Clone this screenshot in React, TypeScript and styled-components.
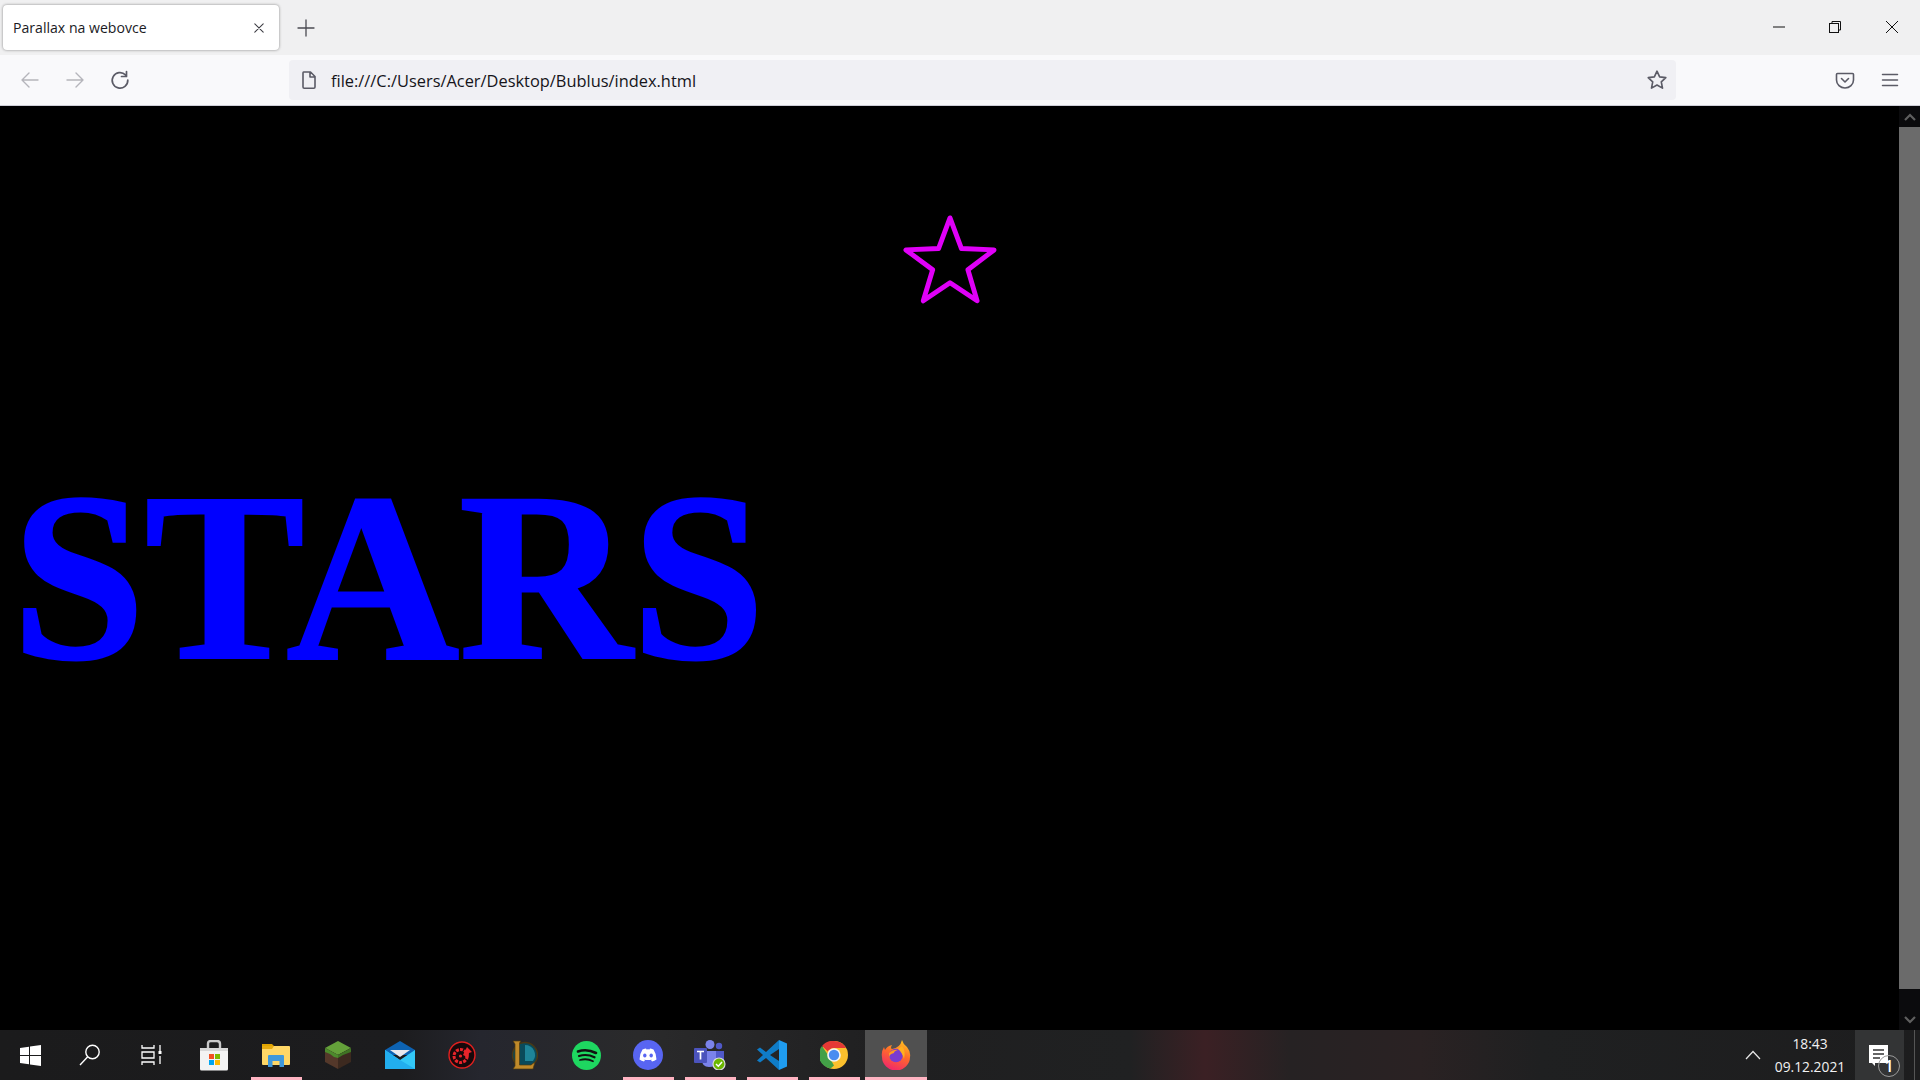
import styled, { createGlobalStyle } from 'styled-components';

const GlobalStyle = createGlobalStyle`
  html, body {
    margin: 0;
    padding: 0;
    background: #000;
  }
  #root {
    width: 1920px;
    height: 1080px;
    overflow: hidden;
  }
`;

const Screen = styled.div`
  width: 1920px;
  height: 1080px;
  display: grid;
  grid-template-rows: 55px 51px 924px 50px;
  font-family: 'Open Sans', 'Liberation Sans', sans-serif;
`;

const TabStrip = styled.div`
  display: flex;
  align-items: flex-start;
  background: #f0f0f1;
  padding-left: 3px;
`;

const Tab = styled.div`
  width: 276px;
  height: 45px;
  margin-top: 5px;
  box-sizing: border-box;
  padding: 0 13px 0 10px;
  display: flex;
  align-items: center;
  justify-content: space-between;
  background: #fff;
  border-radius: 4px;
  box-shadow: 0 0 3px rgba(0, 0, 0, 0.45);
`;

const TabTitle = styled.span`
  font-size: 14.1px;
  color: #1b1b1f;
`;

const NewTab = styled.div`
  width: 24px;
  height: 45px;
  margin: 5px 0 0 15px;
  display: flex;
  align-items: center;
  justify-content: center;
`;

const WindowControls = styled.div`
  margin-left: auto;
  display: flex;
`;

const WindowButton = styled.div`
  width: 56.5px;
  height: 53px;
  display: flex;
  align-items: center;
  justify-content: center;
`;

const Toolbar = styled.div`
  display: flex;
  align-items: center;
  box-sizing: border-box;
  background: #f9f9fb;
  border-bottom: 1px solid #cfcfd8;
  padding-left: 7px;
  padding-bottom: 1px;
`;

const NavButton = styled.div`
  width: 45px;
  height: 40px;
  display: flex;
  align-items: center;
  justify-content: center;
`;

const UrlBar = styled.div`
  width: 1387px;
  height: 40px;
  margin-left: 147px;
  margin-right: 146px;
  box-sizing: border-box;
  padding: 0 8px 0 10px;
  display: flex;
  align-items: center;
  background: #f0f0f4;
  border-radius: 4px;
`;

const UrlText = styled.span`
  margin: 2px 0 0 12px;
  flex: 1;
  font-size: 16.4px;
  color: #15141a;
`;

const Stage = styled.div`
  display: flex;
  background: #000;
`;

const Viewport = styled.main`
  flex: 1;
  display: flex;
  flex-direction: column;
`;

const StarFrame = styled.div`
  display: flex;
  justify-content: center;
  padding-top: 108px;
`;

const Heading = styled.h1`
  margin: 133px 0 0 12px;
  font-family: 'Liberation Serif', 'Times New Roman', serif;
  font-size: 239px;
  font-weight: 700;
  line-height: 276px;
  color: #0000ff;
  -webkit-text-stroke: 3px #0000ff;
`;

const Scrollbar = styled.div`
  width: 21px;
  display: flex;
  flex-direction: column;
  background: #0b0b0d;
`;

const ScrollArrow = styled.div`
  height: 21px;
  display: flex;
  align-items: center;
  justify-content: center;
`;

const ScrollThumb = styled.div`
  height: 862px;
  background: #6b6b6b;
`;

const ScrollTrack = styled.div`
  flex: 1;
`;

const Taskbar = styled.footer`
  display: flex;
  align-items: stretch;
  background: linear-gradient(
    90deg,
    #1b1b1c 0,
    #1c1c1e 400px,
    #25262e 480px,
    #2a2a2b 640px,
    #1f1f20 900px,
    #202122 1130px,
    #3b2024 1205px,
    #262223 1290px,
    #2a2223 1420px,
    #1f2021 1540px,
    #1d1d1e 1920px
  );
`;

const TaskButton = styled.div<{ $width?: number; $active?: boolean; $running?: boolean }>`
  position: relative;
  width: ${({ $width }) => $width ?? 62}px;
  display: flex;
  align-items: center;
  justify-content: center;
  background: ${({ $active }) => ($active ? '#505050' : 'transparent')};

  &::after {
    content: '';
    display: ${({ $running }) => ($running ? 'block' : 'none')};
    position: absolute;
    bottom: 0;
    left: ${({ $active }) => ($active ? 0 : 5.5)}px;
    right: ${({ $active }) => ($active ? 0 : 5.5)}px;
    height: 3px;
    background: #ffb4c2;
  }
`;

const Tray = styled.div`
  margin-left: auto;
  display: flex;
  align-items: stretch;
`;

const TrayChevron = styled.div`
  width: 40px;
  display: flex;
  align-items: center;
  justify-content: center;
`;

const Clock = styled.div`
  width: 74px;
  display: flex;
  flex-direction: column;
  align-items: center;
  justify-content: center;
  gap: 4px;
  font-size: 13.8px;
  line-height: 19px;
  color: #f2f2f2;
`;

const NotifyButton = styled.div`
  position: relative;
  width: 49px;
  margin-left: 8px;
  background: #333435;
`;

const NotifyGlyph = styled.svg`
  display: block;
  margin: 15px 0 0 14px;
`;

const NotifyBadge = styled.span`
  position: absolute;
  left: 23px;
  top: 25px;
  width: 20px;
  height: 20px;
  border: 1px solid #9a9a9a;
  border-radius: 50%;
  font-size: 16px;
  font-weight: 600;
  line-height: 20px;
  text-align: center;
  color: #fff;
`;

const DesktopPeek = styled.div`
  width: 6px;
  margin-left: 10px;
  box-sizing: border-box;
  border-left: 1px solid #555;
`;

const chrome = '#5b5b66';

function Stroke({ size, children, color = chrome, width = 1.6 }: { size: number; children: React.ReactNode; color?: string; width?: number }) {
  return (
    <svg width={size} height={size} viewBox="0 0 20 20" fill="none" stroke={color} strokeWidth={width} strokeLinecap="round" strokeLinejoin="round">
      {children}
    </svg>
  );
}

function PinkStar() {
  return (
    <svg width="98" height="93" viewBox="0 0 100 95" fill="none" stroke="#e000f8" strokeWidth="5" strokeLinejoin="round">
      <path d="M50 4 L61.7 35.3 L95 36.7 L68.3 57 L77.7 88.7 L50 70.3 L22.7 88.7 L32.3 57 L5 36.7 L38.3 35.3 Z" />
    </svg>
  );
}

function WindowsLogo() {
  return (
    <svg width="21" height="21" viewBox="0 0 21 21" fill="#fff">
      <path d="M0 3 L9 1.7 V10 H0 Z M10 1.5 L21 0 V10 H10 Z M0 11 H9 V19.3 L0 18 Z M10 11 H21 V21 L10 19.5 Z" />
    </svg>
  );
}

function SearchIcon() {
  return (
    <svg width="22" height="22" viewBox="0 0 22 22" fill="none" stroke="#fff" strokeWidth="1.4">
      <circle cx="13.5" cy="8" r="6.7" />
      <path d="M8.7 12.8 L1 21" />
    </svg>
  );
}

function TaskViewIcon() {
  return (
    <svg width="22" height="20" viewBox="0 0 22 20" fill="none" stroke="#fff" strokeWidth="1.3">
      <path d="M1 0 V3 H13 V0 M1 7 H13 V13 H1 Z M1 20 V17 H13 V20 M19 0 V6 M19 11 V19" />
      <rect x="17.5" y="6" width="3" height="3" fill="#fff" stroke="none" />
    </svg>
  );
}

function StoreIcon() {
  return (
    <svg width="30" height="31" viewBox="0 0 30 31">
      <path d="M9 8 V4 Q9 1 12 1 H18 Q21 1 21 4 V8" fill="none" stroke="#c9c9c9" strokeWidth="2.4" />
      <path d="M1 8 H29 V29 Q29 30.5 27.5 30.5 H2.5 Q1 30.5 1 29 Z" fill="#f3f3f3" />
      <rect x="1" y="8" width="28" height="3" fill="#d8d8d8" />
      <rect x="10" y="14" width="5" height="5" fill="#f25022" />
      <rect x="16" y="14" width="5" height="5" fill="#7fba00" />
      <rect x="10" y="20" width="5" height="5" fill="#00a4ef" />
      <rect x="16" y="20" width="5" height="5" fill="#ffb900" />
    </svg>
  );
}

function ExplorerIcon() {
  return (
    <svg width="28" height="24" viewBox="0 0 28 24">
      <path d="M0 1 H10 L13 4 H0 Z" fill="#e0a400" />
      <rect y="3" width="28" height="19" rx="1" fill="#ffd766" />
      <path d="M0 3 H12 L10 6 H0 Z" fill="#e8ac10" />
      <path d="M6 24 V13 Q6 12 7 12 H21 Q22 12 22 13 V24 H17.5 V18 H10.5 V24 Z" fill="#3f98db" />
    </svg>
  );
}

function MinecraftIcon() {
  return (
    <svg width="26" height="28" viewBox="0 0 26 28">
      <path d="M13 0 L26 7 L13 14 L0 7 Z" fill="#64a13a" />
      <path d="M0 7 L13 14 V28 L0 21 Z" fill="#54382a" />
      <path d="M26 7 L13 14 V28 L26 21 Z" fill="#3c291f" />
      <path d="M0 7 L13 14 V17 L9 16 L5 13 L0 11 Z" fill="#4c8a2c" />
      <path d="M26 7 L13 14 V17 L18 14 L26 11 Z" fill="#3f7424" />
    </svg>
  );
}

function MailIcon() {
  return (
    <svg width="30" height="28" viewBox="0 0 30 28">
      <path d="M0 9 L15 0 L30 9 V14 H0 Z" fill="#0d63b3" />
      <path d="M5 9 H25 L15 16 Z" fill="#e9e9ee" />
      <path d="M0 9 L15 19 L30 9 V28 H0 Z" fill="#33c8f7" />
      <path d="M0 28 L0 9 L15 19 L30 28 Z" fill="#22aeee" />
    </svg>
  );
}

function BoosterIcon() {
  return (
    <svg width="28" height="28" viewBox="0 0 28 28">
      <circle cx="14" cy="14" r="13" fill="#17090b" stroke="#e0201f" strokeWidth="1.4" />
      <circle cx="12.5" cy="15" r="6.5" fill="none" stroke="#e8242a" strokeWidth="3" strokeDasharray="3 1.2" />
      <path d="M15 14 L19 6 L24 11 L21 12 L20 19 L17 15 Z" fill="#e8242a" />
      <circle cx="12.5" cy="15" r="1.6" fill="#e8242a" />
    </svg>
  );
}

function LeagueIcon() {
  return (
    <svg width="28" height="31" viewBox="0 0 28 31">
      <circle cx="15" cy="15" r="12.5" fill="#0a4a5a" stroke="#4a3814" strokeWidth="1.5" />
      <path d="M15 5 A10 10 0 0 1 23 21 L15 21 Z" fill="#1e8498" />
      <path d="M3 1 H11 L9.5 3 V25 H21 L25 22 L23 29 H3 L5 26 V4 Z" fill="#c08a2a" stroke="#4f3a10" strokeWidth="0.7" />
    </svg>
  );
}

function SpotifyIcon() {
  return (
    <svg width="29" height="29" viewBox="0 0 29 29" fill="none">
      <circle cx="14.5" cy="14.5" r="14.5" fill="#1ed760" />
      <path d="M6 10.5 Q15 7.5 24 12" stroke="#111" strokeWidth="2.6" strokeLinecap="round" />
      <path d="M7 15 Q15 12.5 22.5 16.3" stroke="#111" strokeWidth="2.2" strokeLinecap="round" />
      <path d="M8 19 Q15 17 21 20.2" stroke="#111" strokeWidth="1.8" strokeLinecap="round" />
    </svg>
  );
}

function DiscordIcon() {
  return (
    <svg width="30" height="30" viewBox="0 0 30 30">
      <circle cx="15" cy="15" r="15" fill="#5865f2" />
      <path d="M9.5 9.5 Q12 8.5 13 8.5 L13.5 9.5 Q15 9.2 16.5 9.5 L17 8.5 Q18 8.5 20.5 9.5 Q23.5 14 23.5 19.5 Q21.5 21 19 21.5 L18 20 L19.5 19.2 Q15 21 10.5 19.2 L12 20 L11 21.5 Q8.5 21 6.5 19.5 Q6.5 14 9.5 9.5 Z" fill="#fff" />
      <ellipse cx="11.8" cy="15.5" rx="1.7" ry="1.9" fill="#5865f2" />
      <ellipse cx="18.2" cy="15.5" rx="1.7" ry="1.9" fill="#5865f2" />
    </svg>
  );
}

function TeamsIcon() {
  return (
    <svg width="32" height="30" viewBox="0 0 32 30">
      <circle cx="16" cy="4.5" r="4.5" fill="#7b83eb" />
      <circle cx="25" cy="6" r="3.2" fill="#5059c9" />
      <path d="M20 11 H30 V19 Q30 23 25 23 H20 Z" fill="#5059c9" />
      <path d="M8 11 H22 V22 Q22 27 15 27 Q8 27 8 20 Z" fill="#7b83eb" />
      <rect x="0" y="8" width="13" height="15" rx="1" fill="#4b53bc" />
      <path d="M3 11.5 H10 M6.5 11.5 V19.5" stroke="#fff" strokeWidth="1.7" fill="none" />
      <circle cx="25" cy="24" r="6" fill="#6bb700" stroke="#d8d8d8" strokeWidth="1.2" />
      <path d="M22 24 L24.3 26.2 L28 22" stroke="#fff" strokeWidth="1.5" fill="none" />
    </svg>
  );
}

function VsCodeIcon() {
  return (
    <svg width="30" height="30" viewBox="0 0 30 30">
      <path d="M22 0 L30 3.5 V26.5 L22 30 Z" fill="#1f9cf0" />
      <path d="M22 0 L9 12 L3 7.5 L0 9.5 L6 15 L0 20.5 L3 22.5 L9 18 L22 30 V21 L13 15 L22 9 Z" fill="#0f7cc7" />
    </svg>
  );
}

function ChromeIcon() {
  return (
    <svg width="28" height="28" viewBox="0 0 28 28">
      <circle cx="14" cy="14" r="14" fill="#fbc02d" />
      <path d="M14 0 A14 14 0 0 1 26.1 7 H14 A7 7 0 0 0 7.9 10.5 L2 4.9 A14 14 0 0 1 14 0 Z" fill="#e53935" />
      <path d="M2 4.9 L8 14 L14 24.5 L10.5 27.6 A14 14 0 0 1 2 4.9 Z" fill="#43a047" />
      <circle cx="14" cy="14" r="6.8" fill="#f5f5f5" />
      <circle cx="14" cy="14" r="5.2" fill="#4a8df0" />
    </svg>
  );
}

function FirefoxIcon() {
  return (
    <svg width="30" height="30" viewBox="0 0 30 30">
      <defs>
        <linearGradient id="foxBody" x1="0.7" y1="0" x2="0.3" y2="1">
          <stop offset="0" stopColor="#ffc11f" />
          <stop offset="0.45" stopColor="#ff6a2a" />
          <stop offset="1" stopColor="#f0246e" />
        </linearGradient>
      </defs>
      <path d="M21 0 Q22 4 26 7 Q30 12 29 17 A14 13.5 0 0 1 1 17 Q0 12 3 7 L4 10 Q6 6 11 5 Q9 8 11 9 Q19 8 21 0 Z" fill="url(#foxBody)" />
      <circle cx="15" cy="15.5" r="6.8" fill="#7a3bd0" />
      <path d="M8 13 Q12 9 17 10 Q13 11 13 13 Q8 14 8 18 Z" fill="#ff9a20" />
      <path d="M21 6 Q25 11 23 19 Q21 12 17 9 Z" fill="#ffb01f" />
    </svg>
  );
}

const taskApps = [
  { key: 'store', icon: <StoreIcon /> },
  { key: 'explorer', icon: <ExplorerIcon />, running: true },
  { key: 'minecraft', icon: <MinecraftIcon /> },
  { key: 'mail', icon: <MailIcon /> },
  { key: 'booster', icon: <BoosterIcon /> },
  { key: 'league', icon: <LeagueIcon /> },
  { key: 'spotify', icon: <SpotifyIcon /> },
  { key: 'discord', icon: <DiscordIcon />, running: true },
  { key: 'teams', icon: <TeamsIcon />, running: true },
  { key: 'vscode', icon: <VsCodeIcon />, running: true },
  { key: 'chrome', icon: <ChromeIcon />, running: true },
  { key: 'firefox', icon: <FirefoxIcon />, running: true, active: true },
];

export default function App() {
  return (
    <Screen>
      <GlobalStyle />
      <TabStrip>
        <Tab>
          <TabTitle>Parallax na webovce</TabTitle>
          <Stroke size={14} color="#3b3b42" width={1.5}>
            <path d="M4 4 L16 16 M16 4 L4 16" />
          </Stroke>
        </Tab>
        <NewTab>
          <Stroke size={20} color="#4a4a52" width={1.3}>
            <path d="M10 2 V18 M2 10 H18" />
          </Stroke>
        </NewTab>
        <WindowControls>
          <WindowButton>
            <svg width="12" height="2" viewBox="0 0 12 2"><path d="M0 1 H12" stroke="#111" strokeWidth="1" /></svg>
          </WindowButton>
          <WindowButton>
            <svg width="12" height="12" viewBox="0 0 12 12" fill="none" stroke="#111" strokeWidth="1">
              <path d="M3 2.5 V0.5 H11.5 V9 H9.5" />
              <rect x="0.5" y="2.5" width="9" height="9" />
            </svg>
          </WindowButton>
          <WindowButton>
            <svg width="14" height="14" viewBox="0 0 14 14" fill="none" stroke="#111" strokeWidth="1">
              <path d="M1 1 L13 13 M13 1 L1 13" />
            </svg>
          </WindowButton>
        </WindowControls>
      </TabStrip>

      <Toolbar>
        <NavButton>
          <Stroke size={20} color="#b5b5bb" width={1.4}>
            <path d="M18 10 H2 M9 3 L2 10 L9 17" />
          </Stroke>
        </NavButton>
        <NavButton>
          <Stroke size={20} color="#b5b5bb" width={1.4}>
            <path d="M2 10 H18 M11 3 L18 10 L11 17" />
          </Stroke>
        </NavButton>
        <NavButton>
          <Stroke size={20} color={chrome} width={1.7}>
            <path d="M15.5 4.8 A7.8 7.8 0 1 0 17.8 10 M16.5 1.5 V6.5 H11.5" />
          </Stroke>
        </NavButton>
        <UrlBar>
          <Stroke size={20} color={chrome} width={1.6}>
            <path d="M4.5 2 H11.5 L16 6.5 V17 Q16 18.2 14.8 18.2 H5.2 Q4 18.2 4 17 V3 Q4 2 4.5 2 Z M11 2.5 V7 H15.5" />
          </Stroke>
          <UrlText>file:///C:/Users/Acer/Desktop/Bublus/index.html</UrlText>
          <Stroke size={22} color={chrome} width={1.5}>
            <path d="M10 2 L12.4 7.2 L18 7.9 L13.9 11.7 L15 17.4 L10 14.6 L5 17.4 L6.1 11.7 L2 7.9 L7.6 7.2 Z" />
          </Stroke>
        </UrlBar>
        <NavButton>
          <Stroke size={20} color={chrome} width={1.6}>
            <path d="M2.5 3.5 H17.5 Q18.5 3.5 18.5 4.5 V10 A8.5 8 0 0 1 1.5 10 V4.5 Q1.5 3.5 2.5 3.5 Z M6.5 8.5 L10 12 L13.5 8.5" />
          </Stroke>
        </NavButton>
        <NavButton>
          <Stroke size={20} color={chrome} width={1.5}>
            <path d="M2.5 4.5 H17.5 M2.5 10 H17.5 M2.5 15.5 H17.5" />
          </Stroke>
        </NavButton>
      </Toolbar>

      <Stage>
        <Viewport>
          <StarFrame>
            <PinkStar />
          </StarFrame>
          <Heading>STARS</Heading>
        </Viewport>
        <Scrollbar>
          <ScrollArrow>
            <svg width="12" height="8" viewBox="0 0 12 8" fill="none" stroke="#5f5f5f" strokeWidth="2.2"><path d="M1 7 L6 2 L11 7" /></svg>
          </ScrollArrow>
          <ScrollThumb />
          <ScrollTrack />
          <ScrollArrow>
            <svg width="12" height="8" viewBox="0 0 12 8" fill="none" stroke="#5f5f5f" strokeWidth="2.2"><path d="M1 1 L6 6 L11 1" /></svg>
          </ScrollArrow>
        </Scrollbar>
      </Stage>

      <Taskbar>
        <TaskButton $width={60}><WindowsLogo /></TaskButton>
        <TaskButton $width={60}><SearchIcon /></TaskButton>
        <TaskButton $width={63}><TaskViewIcon /></TaskButton>
        {taskApps.map((app) => (
          <TaskButton key={app.key} $running={app.running} $active={app.active}>
            {app.icon}
          </TaskButton>
        ))}
        <Tray>
          <TrayChevron>
            <svg width="16" height="10" viewBox="0 0 16 10" fill="none" stroke="#e8e8e8" strokeWidth="1.2"><path d="M1 9 L8 1.5 L15 9" /></svg>
          </TrayChevron>
          <Clock>
            <span>18:43</span>
            <span>09.12.2021</span>
          </Clock>
          <NotifyButton>
            <NotifyGlyph width="20" height="22" viewBox="0 0 20 22">
              <path d="M0 0 H19 V18 H6 V21 L3 18 H0 Z" fill="#fff" />
              <path d="M4 5 H15 M4 9 H15 M4 13 H11" stroke="#333" strokeWidth="1.3" />
            </NotifyGlyph>
            <NotifyBadge>1</NotifyBadge>
          </NotifyButton>
          <DesktopPeek />
        </Tray>
      </Taskbar>
    </Screen>
  );
}
